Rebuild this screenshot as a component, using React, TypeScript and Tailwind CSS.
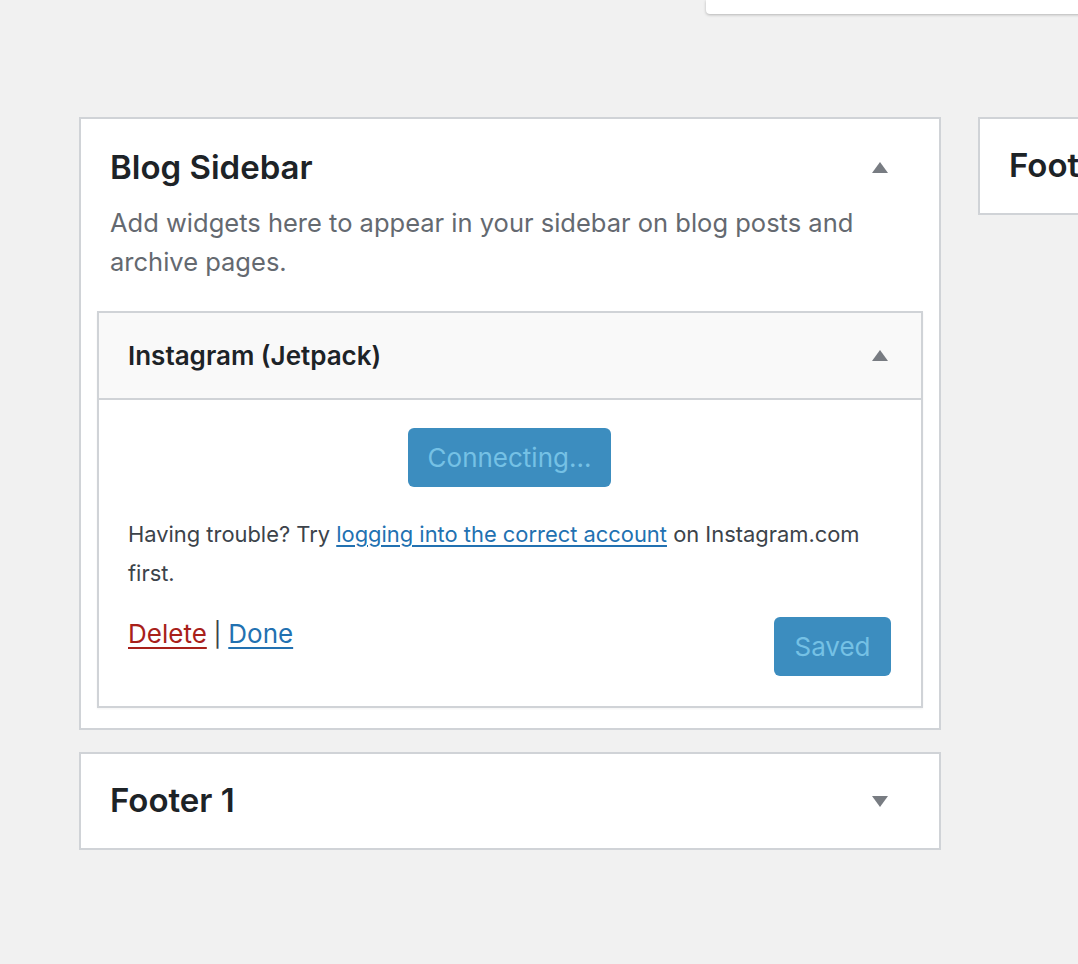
import React from "react";

function TriUp() {
  return (
    <svg width="16" height="11" viewBox="0 0 16 11" className="shrink-0">
      <polygon points="8,0 16,11 0,11" fill="#787c82" />
    </svg>
  );
}
function TriDown() {
  return (
    <svg width="16" height="11" viewBox="0 0 16 11" className="shrink-0">
      <polygon points="0,0 16,0 8,11" fill="#787c82" />
    </svg>
  );
}

export default function App() {
  const font = { fontFamily: "Inter, 'Noto Sans', 'Liberation Sans', sans-serif" };
  return (
    <div
      className="relative w-[1078px] h-[964px] overflow-hidden bg-[#f1f1f1]"
      style={font}
    >
      <div className="absolute top-0 left-[706px] w-[500px] h-[14px] bg-white rounded-bl-[4px] shadow-[0_1px_3px_rgba(0,0,0,0.25)]" />

      <div className="flex items-start gap-[37px] pt-[117px] pl-[79px]">
        <div className="flex flex-col gap-[22px] shrink-0">
          {/* Blog Sidebar */}
          <div className="w-[862px] border-2 border-[#d0d3d7] bg-white">
            <div className="flex items-center justify-between pl-[29px] pr-[51px] pt-[28px]">
              <h2 className="text-[33px] leading-[40px] font-semibold text-[#1d2327]">
                Blog Sidebar
              </h2>
              <TriUp />
            </div>
            <p className="pl-[29px] pr-[40px] mt-[16px] text-[25.5px] leading-[39px] text-[#646970]">
              Add widgets here to appear in your sidebar on blog posts and archive pages.
            </p>
            <div className="mx-[16px] mt-[30px] mb-[20px] border-2 border-[#d0d3d7] shadow-[0_1px_2px_rgba(0,0,0,0.05)]">
              <div className="flex items-center justify-between h-[87px] pl-[29px] pr-[33px] bg-[#f9f9f9] border-b-2 border-[#d0d3d7]">
                <h3 className="text-[26px] font-semibold text-[#1d2327]">Instagram (Jetpack)</h3>
                <TriUp />
              </div>
              <div className="pl-[29px] pr-[30px] pt-[28px] pb-[30px] bg-white">
                <div className="flex justify-center">
                  <div className="h-[59px] w-[203px] rounded-[6px] bg-[#3c8dbf] flex items-center justify-center text-[26px] text-[#75c1e5]">
                    Connecting...
                  </div>
                </div>
                <p className="mt-[28px] text-[21.9px] leading-[39px] text-[#3c434a]">
                  Having trouble? Try{" "}
                  <a className="text-[#2271b1] underline underline-offset-[3px]">logging into the correct account</a>{" "}
                  on Instagram.com first.
                </p>
                <div className="mt-[21px] flex items-start justify-between">
                  <div className="text-[26px] leading-[39px] text-[#3c434a]">
                    <a className="text-[#a8201a] underline underline-offset-[4px]">Delete</a>
                    <span className="text-[24px]">{" | "}</span>
                    <a className="text-[#2271b1] underline underline-offset-[4px]">Done</a>
                  </div>
                  <div className="mt-[3px] h-[59px] w-[117px] rounded-[6px] bg-[#3c8dbf] flex items-center justify-center text-[26px] text-[#75c1e5]">
                    Saved
                  </div>
                </div>
              </div>
            </div>
          </div>

          {/* Footer 1 */}
          <div className="w-[862px] h-[98px] border-2 border-[#d0d3d7] bg-white flex items-center justify-between pl-[29px] pr-[51px]">
            <h2 className="text-[33px] font-semibold text-[#1d2327]">Footer 1</h2>
            <TriDown />
          </div>
        </div>

        {/* Right card */}
        <div className="w-[862px] h-[98px] shrink-0 border-2 border-[#d0d3d7] bg-white flex items-center pl-[29px]">
          <h2 className="text-[33px] font-semibold text-[#1d2327]">Footer 2</h2>
        </div>
      </div>
    </div>
  );
}
